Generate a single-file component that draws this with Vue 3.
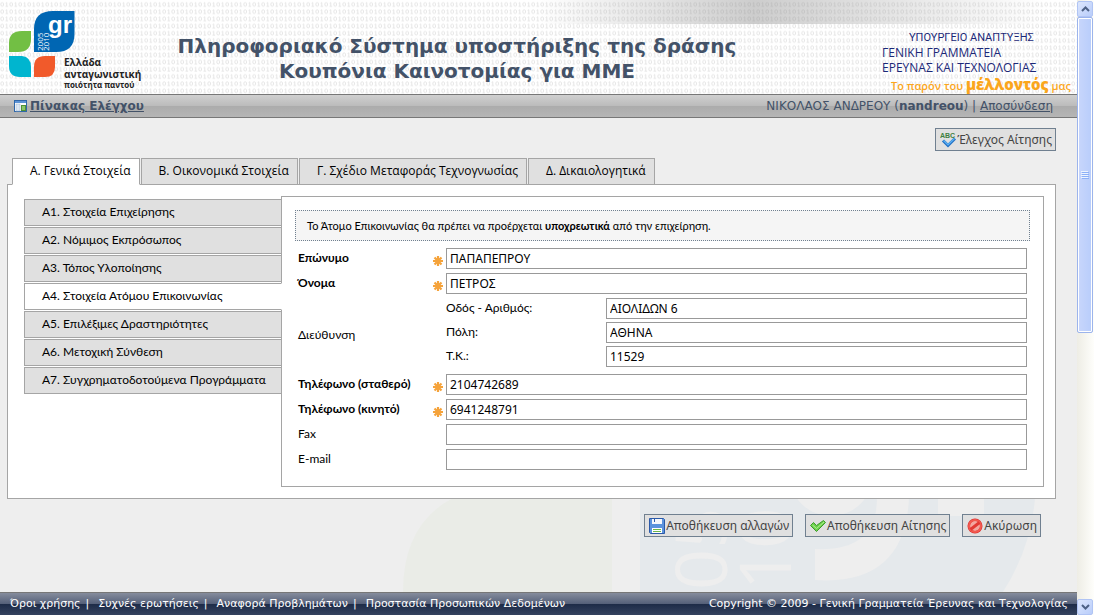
<script setup>
import { ref, reactive } from 'vue'

const tabs = ['Α. Γενικά Στοιχεία', 'Β. Οικονομικά Στοιχεία', 'Γ. Σχέδιο Μεταφοράς Τεχνογνωσίας', 'Δ. Δικαιολογητικά']
const sections = [
  'Α1. Στοιχεία Επιχείρησης',
  'Α2. Νόμιμος Εκπρόσωπος',
  'Α3. Τόπος Υλοποίησης',
  'Α4. Στοιχεία Ατόμου Επικοινωνίας',
  'Α5. Επιλέξιμες Δραστηριότητες',
  'Α6. Μετοχική Σύνθεση',
  'Α7. Συγχρηματοδοτούμενα Προγράμματα',
]
const links = ['Όροι χρήσης', 'Συχνές ερωτήσεις', 'Αναφορά Προβλημάτων', 'Προστασία Προσωπικών Δεδομένων']
const activeTab = ref(0)
const activeSection = ref(3)

const names = reactive([
  { id: 'surname', label: 'Επώνυμο', value: 'ΠΑΠΑΠΕΠΡΟΥ', required: true },
  { id: 'name', label: 'Όνομα', value: 'ΠΕΤΡΟΣ', required: true },
])
const address = reactive([
  { id: 'street', label: 'Οδός - Αριθμός:', value: 'ΑΙΟΛΙΔΩΝ 6' },
  { id: 'city', label: 'Πόλη:', value: 'ΑΘΗΝΑ' },
  { id: 'zip', label: 'Τ.Κ.:', value: '11529' },
])
const contacts = reactive([
  { id: 'phone', label: 'Τηλέφωνο (σταθερό)', value: '2104742689', required: true },
  { id: 'mobile', label: 'Τηλέφωνο (κινητό)', value: '6941248791', required: true },
  { id: 'fax', label: 'Fax', value: '', required: false },
  { id: 'email', label: 'E-mail', value: '', required: false },
])
</script>

<template>
  <div class="app">
    <div class="page">
      <header class="banner">
        <svg class="binary" width="100%" height="100%" aria-hidden="true">
          <defs>
            <pattern id="bits" width="9" height="7.2" patternUnits="userSpaceOnUse">
              <ellipse cx="2.2" cy="4.4" rx="1.4" ry="1.9" fill="none" stroke="#e4e4e4" stroke-width="0.9" />
              <path d="M5.6 3.2L6.8 2.5V6.3M5.5 6.4H8.1" fill="none" stroke="#e4e4e4" stroke-width="0.9" />
            </pattern>
          </defs>
          <rect width="100%" height="100%" fill="url(#bits)" />
        </svg>
        <div class="sheen"></div>
        <div class="logo">
          <svg width="68" height="70" viewBox="0 0 68 70" aria-hidden="true">
            <path d="M0 40V32Q0 20 13 20H22V28Q22 41 9 41H0Z" fill="#72bf44" />
            <path d="M25 41V18Q25 0 44 0H65.500V23Q65.500 41 47 41Z" fill="#0066b3" />
            <path d="M0 45H13Q22 46 22 56V66H11Q0 66 0 55Z" fill="#00b5cf" />
            <path d="M25 66V56Q25 45 36 45H46V56Q46 66 36 66Z" fill="#f15a2b" />
            <text x="39" y="22" class="logo-gr">gr</text>
            <text transform="translate(34 40) rotate(-90)" class="logo-year">2005</text>
            <text transform="translate(40 40) rotate(-90)" class="logo-year">2010</text>
          </svg>
          <p class="logo-text"><span>Ελλάδα</span><span>ανταγωνιστική</span><small>ποιότητα παντού</small></p>
        </div>
        <h1>Πληροφοριακό Σύστημα υποστήριξης της δράσης<br />Κουπόνια Καινοτομίας για ΜΜΕ</h1>
        <div class="ministry">
          <p class="ministry-top">ΥΠΟΥΡΓΕΙΟ ΑΝΑΠΤΥΞΗΣ</p>
          <p>ΓΕΝΙΚΗ ΓΡΑΜΜΑΤΕΙΑ</p>
          <p>ΕΡΕΥΝΑΣ ΚΑΙ ΤΕΧΝΟΛΟΓΙΑΣ</p>
          <p class="slogan">Το παρόν του <b>μέλλοντός</b> μας</p>
        </div>
      </header>

      <nav class="bar">
        <a href="#" class="dash">
          <svg width="14" height="14" viewBox="0 0 14 14" aria-hidden="true">
            <rect x="1.500" y="1.500" width="12" height="11" fill="#fff" stroke="#2f67a8" />
            <rect x="2" y="2" width="11" height="2" fill="#5c93d6" />
            <rect x="3" y="5" width="4" height="7" fill="#dbe6f2" stroke="#9db4cf" stroke-width="0.500" />
            <rect x="8.500" y="6.500" width="4" height="5" fill="#8cc66a" stroke="#4f9137" />
          </svg>
          <span>Πίνακας Ελέγχου</span>
        </a>
        <div class="user">ΝΙΚΟΛΑΟΣ ΑΝΔΡΕΟΥ (<b>nandreou</b>) | <a href="#">Αποσύνδεση</a></div>
      </nav>

      <main>
        <svg class="watermark" width="632" height="94" viewBox="0 0 632 94" aria-hidden="true">
          <path d="M0 94Q0 26 50 0H209V94Z" fill="#eaece7" />
          <path d="M237 0H632Q628 50 600 94H237Z" fill="#e5e9ec" />
          <ellipse cx="428" cy="-24" rx="42" ry="42" fill="#eeeeee" />
          <rect x="535" y="0" width="46" height="18" fill="#eeeeee" />
          <path d="M412 51V82Q502 88 506 0H474Q474 54 412 51Z" fill="#eeeeee" />
          <text transform="translate(324 92) rotate(-90)" class="mark-year">05</text>
          <text transform="translate(388 92) rotate(-90)" class="mark-year">10</text>
        </svg>

        <div class="tools">
          <button type="button">
            <svg width="16" height="16" viewBox="0 0 16 16" aria-hidden="true">
              <path d="M3 8.500L8 13.500L15 6.500" fill="none" stroke="#1f6fc4" stroke-width="3" />
              <path d="M3.500 8.500L8 12.800L14.500 6.500" fill="none" stroke="#5db0f2" stroke-width="1.400" />
              <text x="0" y="6" class="abc">ABC</text>
            </svg>
            Έλεγχος Αίτησης
          </button>
        </div>

        <div class="tabs" role="tablist">
          <button v-for="(t, i) in tabs" :key="t" type="button" role="tab" :aria-selected="i === activeTab" :class="{ on: i === activeTab }" @click="activeTab = i">{{ t }}</button>
        </div>

        <div class="panel">
          <div class="side" role="tablist">
            <button v-for="(s, i) in sections" :key="s" type="button" role="tab" :aria-selected="i === activeSection" :class="{ on: i === activeSection }" @click="activeSection = i">{{ s }}</button>
          </div>
          <form class="form" @submit.prevent>
            <p class="notice">Το Άτομο Επικοινωνίας θα πρέπει να προέρχεται <b>υποχρεωτικά</b> από την επιχείρηση.</p>
            <div v-for="f in names" :key="f.id" class="row">
              <label :for="f.id" class="bold">{{ f.label }}</label>
              <svg class="star" width="10" height="10" viewBox="0 0 10 10" aria-hidden="true"><path d="M5 0V10M0 5H10M1.500 1.500L8.500 8.500M8.500 1.500L1.500 8.500" stroke="#f5a33b" stroke-width="2.200" /></svg>
              <input :id="f.id" v-model="f.value" type="text" />
            </div>
            <fieldset class="row address">
              <span class="group">Διεύθυνση</span>
              <div class="stack">
                <div v-for="f in address" :key="f.id" class="sub">
                  <label :for="f.id">{{ f.label }}</label>
                  <input :id="f.id" v-model="f.value" type="text" />
                </div>
              </div>
            </fieldset>
            <div v-for="f in contacts" :key="f.id" class="row">
              <label :for="f.id" :class="{ bold: f.required }">{{ f.label }}</label>
              <svg v-if="f.required" class="star" width="10" height="10" viewBox="0 0 10 10" aria-hidden="true"><path d="M5 0V10M0 5H10M1.500 1.500L8.500 8.500M8.500 1.500L1.500 8.500" stroke="#f5a33b" stroke-width="2.200" /></svg>
              <input :id="f.id" v-model="f.value" type="text" />
            </div>
          </form>
        </div>

        <div class="actions">
          <button type="button">
            <svg width="16" height="16" viewBox="0 0 16 16" aria-hidden="true">
              <path d="M0.500 0.500H14.500L15.500 1.500V15.500H1.500L0.500 14.500Z" fill="#5b93dd" stroke="#2a59a8" />
              <rect x="3" y="1" width="10" height="5" fill="#f4f7fc" />
              <rect x="5" y="1" width="1" height="3" fill="#2a59a8" />
              <rect x="3" y="10" width="10" height="5" fill="#fff" />
              <path d="M4 11.500H12M4 13.500H12" stroke="#6cb64a" />
            </svg>
            Αποθήκευση αλλαγών
          </button>
          <button type="button">
            <svg width="16" height="16" viewBox="0 0 16 16" aria-hidden="true">
              <path d="M0.500 7.500L3.500 4.500L6.500 7.500L13.500 2.500L15.500 4.500L6.500 13.500Z" fill="#6ad04a" stroke="#3d9a2b" />
              <path d="M2.500 7L6.500 10.500L14 4" fill="none" stroke="#b2ee92" />
            </svg>
            Αποθήκευση Αίτησης
          </button>
          <button type="button">
            <svg width="16" height="16" viewBox="0 0 16 16" aria-hidden="true">
              <circle cx="8" cy="8" r="7.500" fill="#d92b2b" />
              <circle cx="8" cy="8" r="5" fill="#f3a8a0" />
              <circle cx="8" cy="8" r="6" fill="none" stroke="#f25a50" stroke-width="2" />
              <path d="M3.500 11.500L12.500 4.500" stroke="#e23a34" stroke-width="3" />
            </svg>
            Ακύρωση
          </button>
        </div>
      </main>

      <footer>
        <nav class="links">
          <template v-for="(l, i) in links" :key="l"><a href="#">{{ l }}</a><i v-if="i < links.length - 1">|</i></template>
        </nav>
        <span>Copyright © 2009 - Γενική Γραμματεία Έρευνας και Τεχνολογίας</span>
      </footer>
    </div>

    <div class="scroll" aria-hidden="true">
      <div class="arrow"><svg width="9" height="6" viewBox="0 0 9 6"><path d="M1 5L4.500 1.500L8 5" fill="none" stroke="#4d6185" stroke-width="2" /></svg></div>
      <div class="thumb"><svg width="8" height="8" viewBox="0 0 8 8"><path d="M0 0.500H7M0 2.500H7M0 4.500H7M0 6.500H7" stroke="#eef4fe" /><path d="M1 1.500H8M1 3.500H8M1 5.500H8M1 7.500H8" stroke="#8cb0f8" /></svg></div>
      <div class="track"></div>
      <div class="arrow"><svg width="9" height="6" viewBox="0 0 9 6"><path d="M1 1L4.500 4.500L8 1" fill="none" stroke="#4d6185" stroke-width="2" /></svg></div>
    </div>
  </div>
</template>

<style>
body { margin: 0; }
</style>

<style scoped>
* { box-sizing: border-box; }
.app {
  display: grid;
  grid-template-columns: 1fr 17px;
  min-height: 100vh;
  background: #eeeeee;
  font-family: Lato, "Open Sans", sans-serif;
  font-size: 12px;
  color: #000;
}
.page { display: flex; flex-direction: column; min-width: 0; }
p, h1 { margin: 0; }
button, input { font: inherit; color: inherit; border-radius: 0; }

.banner {
  position: relative;
  display: grid;
  grid-template-columns: 160px 1fr 323px;
  height: 94px;
  background: #fff;
}
.binary, .sheen { position: absolute; top: 0; left: 0; }
.sheen {
  width: 100%;
  height: 24px;
  background: linear-gradient(90deg, transparent 50%, rgba(130, 130, 130, 0.4) 70%, rgba(150, 150, 150, 0.3) 80%, transparent 97%);
}
.logo, h1, .ministry { position: relative; }
.logo { display: flex; padding: 11px 0 0 9px; }
.logo svg { flex: none; }
.logo-text {
  display: flex;
  flex-direction: column;
  align-self: flex-start;
  margin: 45px 0 0 -13px;
  font: bold 10px/12px "Open Sans", sans-serif;
  color: #222;
}
.logo-text small { font-size: 8px; line-height: 10px; white-space: nowrap; }
.logo-gr { font: bold 24px "Liberation Sans", sans-serif; fill: #fff; }
.logo-year { font: 8px "Open Sans", sans-serif; fill: #fff; }
h1 {
  display: flex;
  justify-content: center;
  padding: 34px 0 0;
  text-align: center;
  white-space: nowrap;
  font: bold 20px/25px "DejaVu Sans", sans-serif;
  color: #435268;
}
.ministry { padding: 30px 0 0 128px; font-family: "Open Sans", sans-serif; font-size: 12px; line-height: 15px; color: #1b2878; white-space: nowrap; }
.ministry .ministry-top { padding-left: 27px; font-family: Roboto, sans-serif; font-size: 11px; }
.ministry .slogan { padding-left: 9px; line-height: 19px; font-size: 11px; font-weight: 600; color: #fba61c; }
.slogan b { font-size: 15px; }

.bar {
  display: flex;
  justify-content: space-between;
  align-items: center;
  height: 24px;
  padding: 0 24px 0 13px;
  border: solid #777;
  border-width: 1px 0;
  background: linear-gradient(#d0d0d0, #bcbcbc 48%, #acacac 52%, #b5b5b5);
  font-family: "DejaVu Sans", sans-serif;
  font-size: 12px;
  color: #435268;
}
.bar a { color: #435268; }
.dash { display: flex; align-items: center; gap: 3px; font-weight: bold; }

main { position: relative; flex: 1; padding: 10px 21px 0 7px; }
.watermark { position: absolute; left: 403px; bottom: 0; }
.mark-year { font: 72px "Open Sans", sans-serif; fill: #eeeeee; }
.tools, .actions { position: relative; display: flex; justify-content: flex-end; }
.tools button, .actions button {
  display: flex;
  align-items: center;
  gap: 1px;
  height: 23px;
  padding: 0 3px 0 4px;
  border: 1px solid #708090;
  background: #e0e0e0;
  font-family: "Noto Sans", sans-serif;
  font-size: 12px;
  color: #444;
  white-space: nowrap;
}
.abc { font: bold 7px "Liberation Sans", sans-serif; fill: #3f7f3f; }
.actions { gap: 12px; padding: 15px 15px 0 0; }

.tabs { position: relative; z-index: 1; display: flex; gap: 1px; margin: 7px 0 -1px 5px; }
.tabs button, .side button {
  height: 27px;
  padding: 0 8px 2px 17px;
  border: 1px solid #a5a5a5;
  background: #e0e0e0;
  white-space: nowrap;
}
.tabs button { font-family: "Open Sans", sans-serif; }
.tabs button.on { background: #fff; border-bottom-color: #fff; }
.panel {
  position: relative;
  display: flex;
  padding: 11px 11px 11px 16px;
  border: 1px solid #a5a5a5;
  background: #fff;
}
.side { position: relative; z-index: 1; display: flex; flex-direction: column; gap: 1px; width: 258px; margin: 3px -1px 0 0; }
.side button { text-align: left; }
.side button.on { background: #fff; border-right-color: #fff; }
.form { flex: 1; min-width: 0; padding: 13px 13px 12px; border: 1px solid #a5a5a5; }
.notice {
  padding: 0 11px;
  margin-bottom: 7px;
  border: 1px dotted #708090;
  background: #f5f5f5;
  font-size: 11px;
  line-height: 29px;
}
.row {
  display: grid;
  grid-template-columns: 135px 13px 1fr;
  align-items: center;
  margin: 0 3px 4px;
  padding: 0;
  border: 0;
}
.row > input { grid-column: 3; }
.row label { padding-top: 1px; line-height: 18px; align-self: start; }
.bold { font-weight: bold; }
.star { margin-top: 5px; }
.stack { grid-column: 3; display: grid; gap: 3px; padding-bottom: 3px; }
.sub { display: grid; grid-template-columns: 160px 1fr; }
input { width: 100%; height: 21px; padding: 0 3px; border: 1px solid #999; background: #fff; font-family: "Noto Sans", sans-serif; }

footer {
  display: flex;
  justify-content: space-between;
  align-items: center;
  height: 23px;
  padding: 0 9px 2px 10px;
  border-top: 1px solid #777;
  background: linear-gradient(#858c9c, #56617a 48%, #1e2c48 52%, #34425f);
  font-family: "DejaVu Sans", sans-serif;
  font-size: 11px;
  color: #fff;
  position: relative;
}
.links { display: flex; }
.links a { color: #fff; text-decoration: none; }
.links i { font-style: normal; margin: 0 9px 0 5px; }

.scroll { display: flex; flex-direction: column; padding: 1px 1px 0 0; background: linear-gradient(90deg, #eeede5, #fefefb); }
.arrow {
  display: flex;
  align-items: center;
  justify-content: center;
  height: 16px;
  border: 1px solid #b0c4f4;
  border-radius: 2px;
  background: linear-gradient(135deg, #dce6fd, #b9cdfa);
}
.thumb {
  display: flex;
  align-items: center;
  justify-content: center;
  flex: 315 0 0;
  border: 1px solid #9cb4ec;
  border-radius: 2px;
  box-shadow: inset 0 0 0 1px #fff;
  background: linear-gradient(90deg, #c8d6fb, #b8cdfb);
}
.track { flex: 267 0 0; }
</style>
